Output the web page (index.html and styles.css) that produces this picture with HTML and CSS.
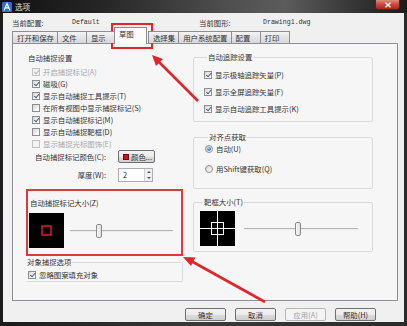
FILE: index.html
```html
<!DOCTYPE html>
<html>
<head>
<meta charset="utf-8">
<link rel="stylesheet" href="styles.css">
</head>
<body>
<div class="window">
  <div class="titlebar">
    <svg class="appicon" width="10" height="10" viewBox="0 0 10 10">
      <rect x="0" y="0" width="10" height="10" rx="1.5" fill="#2f6fd0"/>
      <path d="M2 8.5 L5 1.5 L8 8.5 M3.3 5.8 L6.7 5.8" stroke="#fff" stroke-width="1.2" fill="none"/>
    </svg>
    <span class="title">选项</span>
    <div class="close">
      <svg width="8" height="6" viewBox="0 0 8 6"><path d="M1.5 0.8 L6.5 5.2 M6.5 0.8 L1.5 5.2" stroke="#fff" stroke-width="1.4"/></svg>
    </div>
  </div>
  <div class="dialog">
    <div class="info">
      <span>当前配置:</span><span class="mono">Default</span><span>当前图形:</span><span class="mono">Drawing1.dwg</span>
    </div>
    <div class="tabs">
      <div class="tab">打开和保存</div>
      <div class="tab">文件</div>
      <div class="tab">显示</div>
      <div class="tab active">草图</div>
      <div class="tab">选择集</div>
      <div class="tab">用户系统配置</div>
      <div class="tab">配置</div>
      <div class="tab">打印</div>
    </div>
    <div class="panel">
      <div class="col-left">
        <div class="section-label">自动捕捉设置</div>
        <div class="row disabled"><span class="cb checked"></span>开启捕捉标记(A)</div>
        <div class="row"><span class="cb checked"></span>磁吸(G)</div>
        <div class="row"><span class="cb checked"></span>显示自动捕捉工具提示(T)</div>
        <div class="row"><span class="cb"></span>在所有视图中显示捕捉标记(S)</div>
        <div class="row"><span class="cb checked"></span>显示自动捕捉标记(M)</div>
        <div class="row"><span class="cb"></span>显示自动捕捉靶框(D)</div>
        <div class="row disabled"><span class="cb"></span>显示捕捉光标图饰(E)</div>
        <div class="form">
          <span class="form-label">自动捕捉标记颜色(C):</span>
          <div class="colorbtn"><span class="swatch"></span>颜色...</div>
          <span class="form-label">厚度(W):</span>
          <div class="spinner"><span class="spin-value">2</span><span class="spin-arrows"><i class="up"></i><i class="down"></i></span></div>
        </div>
        <div class="highlight">
          <div class="sub-label">自动捕捉标记大小(Z)</div>
          <div class="preview-row">
            <svg class="preview" width="35" height="35" viewBox="0 0 35 35">
              <rect width="35" height="35" fill="#000"/>
              <rect x="13" y="13" width="9" height="9" fill="none" stroke="#e8202a" stroke-width="1.4"/>
            </svg>
            <div class="slider slider-left"><span class="track"></span><span class="thumb" style="left:25%"></span></div>
          </div>
        </div>
        <fieldset class="group group-objsnap">
          <legend>对象捕捉选项</legend>
          <div class="row"><span class="cb checked"></span>忽略图案填充对象</div>
        </fieldset>
      </div>
      <div class="col-right">
        <fieldset class="group group-track">
          <legend>自动追踪设置</legend>
          <div class="row row-tall"><span class="cb checked"></span>显示极轴追踪矢量(P)</div>
          <div class="row row-tall"><span class="cb checked"></span>显示全屏追踪矢量(F)</div>
          <div class="row row-tall"><span class="cb checked"></span>显示自动追踪工具提示(K)</div>
        </fieldset>
        <fieldset class="group group-align">
          <legend>对齐点获取</legend>
          <div class="row"><span class="rb checked"></span>自动(U)</div>
          <div class="row row-gap"><span class="rb"></span>用Shift键获取(Q)</div>
        </fieldset>
        <fieldset class="group group-aperture">
          <legend>靶框大小(T)</legend>
          <div class="preview-row">
            <svg class="preview" width="35" height="35" viewBox="0 0 35 35">
              <rect width="35" height="35" fill="#000"/>
              <path d="M17.5 0 V35 M0 17.5 H35" stroke="#fff" stroke-width="1"/>
              <rect x="11.5" y="11.5" width="12" height="12" fill="none" stroke="#fff" stroke-width="1"/>
            </svg>
            <div class="slider slider-right"><span class="track"></span><span class="thumb" style="left:45%"></span></div>
          </div>
        </fieldset>
      </div>
    </div>
    <div class="buttons">
      <div class="btn">确定</div>
      <div class="btn">取消</div>
      <div class="btn disabled">应用(A)</div>
      <div class="btn">帮助(H)</div>
    </div>
  </div>
  <svg class="overlay" width="407" height="326" viewBox="0 0 407 326">
    <rect x="112" y="24" width="40" height="24" fill="none" stroke="#e0262b" stroke-width="2"/>
    <line x1="198" y1="101" x2="159" y2="62" stroke="#e0262b" stroke-width="2.6"/>
    <polygon points="152,55 163,59 156,66" fill="#e0262b"/>
    <line x1="265" y1="302" x2="192" y2="261.5" stroke="#e0262b" stroke-width="2.6"/>
    <polygon points="183,257 195.5,257.5 191,266" fill="#e0262b"/>
  </svg>
</div>
</body>
</html>
```

FILE: styles.css
```css
* {
  box-sizing: border-box;
  margin: 0;
  padding: 0;
}

html, body {
  width: 407px;
  height: 326px;
  overflow: hidden;
}

body {
  background: #222;
  font-family: "Noto Sans CJK SC", "Noto Sans", sans-serif;
  font-size: 7.4px;
  line-height: 10px;
  color: #333;
}

.window {
  position: relative;
  width: 407px;
  height: 326px;
  display: flex;
  flex-direction: column;
  background: linear-gradient(90deg, #1b1b1b, #3a3a3a 50%, #2a2a2a);
}

.titlebar {
  height: 13px;
  display: flex;
  align-items: center;
  padding-left: 2px;
  background: linear-gradient(90deg, #111 0%, #262626 25%, #4e4e4e 55%, #5c5c5c 70%, #343434 88%, #1c1c1c 100%);
}

.appicon {
  display: block;
}

.title {
  margin-left: 3px;
  font-size: 7.6px;
  color: #e2e2e2;
}

.close {
  margin-left: auto;
  margin-right: 7px;
  align-self: flex-start;
  width: 25px;
  height: 10px;
  border-radius: 0 0 3px 3px;
  background: linear-gradient(#e08b7c, #c8463a 50%, #b2281c);
  border: 1px solid #5a1f1a;
  border-top: none;
  display: flex;
  align-items: center;
  justify-content: center;
}

.close svg {
  display: block;
}

.dialog {
  height: 309px;
  margin: 0 3px;
  background: #f0f0f0;
  padding-left: 9px;
  display: flex;
  flex-direction: column;
}

.info {
  height: 18px;
  padding-top: 2px;
  display: grid;
  grid-template-columns: 60px 127px 64px auto;
  align-items: center;
}

.mono {
  font-family: "Liberation Mono", monospace;
  font-size: 6.6px;
  color: #333;
}

.tabs {
  height: 12px;
  display: flex;
  align-items: flex-end;
  position: relative;
  z-index: 2;
}

.tab {
  height: 12px;
  min-width: 30px;
  padding: 0 3px 0 4px;
  margin-right: -1px;
  border: 1px solid #8c8e94;
  border-bottom: none;
  background: linear-gradient(#f4f4f4, #e4e4e4 50%, #d8d8d8);
  display: flex;
  align-items: center;
  white-space: nowrap;
}

.tab.active {
  height: 17px;
  margin: 0 1px -1px -1px;
  min-width: 33px;
  background: #fbfbfb;
  position: relative;
  z-index: 3;
  padding-bottom: 4px;
}

.panel {
  width: 386px;
  height: 258px;
  border: 1px solid #8c8e94;
  background: #f6f6f6;
  padding: 9px 0 0 13px;
  display: grid;
  grid-template-columns: 157px 180px;
  column-gap: 10px;
  align-items: start;
}

.col-left, .col-right {
  display: flex;
  flex-direction: column;
}

.section-label {
  height: 10px;
  padding-left: 2px;
  margin-bottom: 3px;
}

.row {
  height: 12px;
  display: flex;
  align-items: center;
  padding-left: 6px;
  white-space: nowrap;
}

.row.disabled {
  color: #a8a8a8;
}

.cb {
  position: relative;
  width: 8px;
  height: 8px;
  margin-right: 3px;
  border: 1px solid #8e8f8f;
  background: linear-gradient(135deg, #d6d6d6, #f6f6f6 70%, #ffffff);
  flex: none;
}

.cb.checked::after {
  content: "";
  position: absolute;
  left: 1.8px;
  top: 0;
  width: 2.2px;
  height: 4.4px;
  border-right: 1.3px solid #3e5592;
  border-bottom: 1.3px solid #3e5592;
  transform: rotate(40deg);
}

.disabled .cb {
  border-color: #c2c2c2;
  background: #f2f2f2;
}

.disabled .cb.checked::after {
  border-color: #b2b2b2;
}

.rb {
  position: relative;
  width: 8px;
  height: 8px;
  margin-right: 3px;
  border-radius: 50%;
  border: 1px solid #8e8f8f;
  background: linear-gradient(135deg, #d6d6d6, #ffffff);
  flex: none;
}

.rb.checked::after {
  content: "";
  position: absolute;
  left: 1px;
  top: 1px;
  width: 4px;
  height: 4px;
  border-radius: 50%;
  background: radial-gradient(circle at 35% 35%, #9fd0f6, #2a6fc0 70%);
}

.form {
  display: grid;
  grid-template-columns: 80px auto;
  column-gap: 12px;
  row-gap: 5px;
  align-items: center;
  justify-items: start;
}

.form-label {
  justify-self: end;
  white-space: nowrap;
}

.colorbtn {
  width: 37px;
  height: 13px;
  border: 1px solid #707070;
  border-radius: 2px;
  background: linear-gradient(#f3f3f3, #ebebeb 50%, #dcdcdc 51%, #d0d0d0);
  display: flex;
  align-items: center;
  padding-left: 4px;
}

.swatch {
  width: 6px;
  height: 6px;
  background: #d0101a;
  border: 1px solid #6a0a0a;
  margin-right: 2px;
}

.spinner {
  width: 35px;
  height: 14px;
  border: 1px solid #abadb3;
  background: #fff;
  display: flex;
  align-items: center;
}

.spin-value {
  flex: 1;
  padding-left: 4px;
}

.spin-arrows {
  width: 8px;
  height: 12px;
  display: flex;
  flex-direction: column;
  border-left: 1px solid #d0d0d0;
  background: #f0f0f0;
}

.spin-arrows i {
  flex: 1;
  display: flex;
  align-items: center;
  justify-content: center;
}

.spin-arrows i::after {
  content: "";
  border-left: 2px solid transparent;
  border-right: 2px solid transparent;
}

.spin-arrows .up::after {
  border-bottom: 2px solid #555;
}

.spin-arrows .down::after {
  border-top: 2px solid #555;
}

.highlight {
  margin-top: 7px;
  height: 67px;
  border: 2px solid #dd3a3e;
  padding: 7px 0 0 1px;
}

.sub-label {
  height: 10px;
  padding-left: 1px;
  margin-bottom: 5px;
}

.preview-row {
  display: flex;
  align-items: center;
}

.preview {
  display: block;
  flex: none;
}

.slider {
  position: relative;
  flex: 1;
  height: 14px;
}

.slider-left {
  margin: 0 8px 0 6px;
}

.slider-right {
  margin: 0 14px 0 9px;
}

.track {
  position: absolute;
  left: 0;
  right: 0;
  top: 6px;
  height: 2px;
  border-top: 1px solid #b4b4b4;
  border-bottom: 1px solid #ececec;
}

.thumb {
  position: absolute;
  top: 0;
  width: 6px;
  height: 14px;
  border: 1px solid #8a8a8a;
  border-radius: 2px;
  background: linear-gradient(90deg, #f8f8f8, #dedede);
}

.group {
  border: 1px solid #dadada;
  border-radius: 2px;
  min-width: 0;
}

.group legend {
  margin-left: 3px;
  padding: 0 1px;
  line-height: 10px;
  height: 10px;
}

.group-objsnap {
  margin-top: 1px;
  padding: 2px 0 0 0;
  border-left-color: transparent;
  height: 25px;
}

.group-objsnap legend {
  margin-left: -1px;
}

.group-objsnap .row {
  padding-left: 1px;
}

.group-track {
  padding: 4px 0 4px 10px;
  margin-top: -1px;
}

.group-track .row, .group-align .row {
  padding-left: 0;
}

.row-tall {
  height: 17px;
}

.group-align {
  margin-top: 10px;
  padding: 1px 0 13px 11px;
}

.row-gap {
  margin-top: 8px;
}

.group-aperture {
  margin-top: 8px;
  padding: 4px 0 5px 6px;
}

.buttons {
  margin-top: 7px;
  display: flex;
  justify-content: flex-end;
  gap: 9px;
  padding-right: 28px;
}

.btn {
  width: 41px;
  height: 13px;
  border: 1px solid #707070;
  border-radius: 2px;
  background: linear-gradient(#f3f3f3, #ebebeb 50%, #dcdcdc 51%, #cfcfcf);
  display: flex;
  align-items: center;
  justify-content: center;
}

.btn.disabled {
  color: #a0a0a0;
  border-color: #b5b5b5;
  background: #f4f4f4;
}

.overlay {
  position: absolute;
  left: 0;
  top: 0;
  pointer-events: none;
}
```
